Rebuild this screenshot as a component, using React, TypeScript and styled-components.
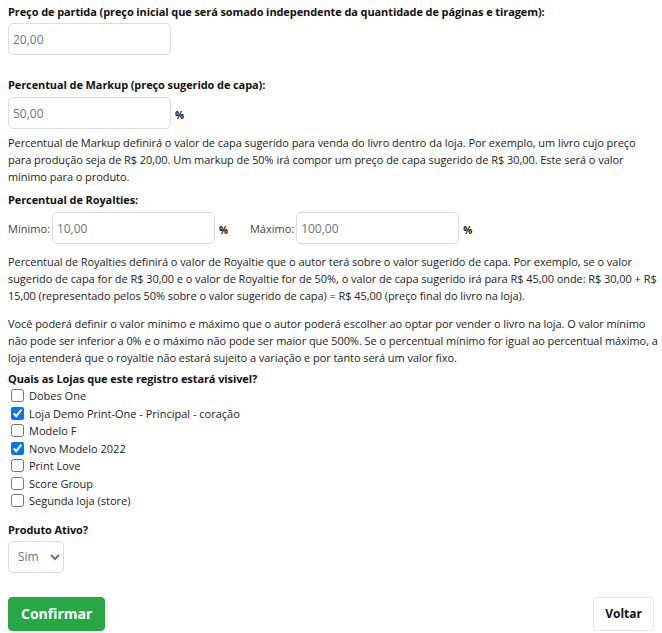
import React from "react";
import styled, { createGlobalStyle } from "styled-components";

const GlobalStyle = createGlobalStyle`
    body {
        margin: 0;
        background: #fff;
        font-family: "Open Sans", "Liberation Sans", sans-serif;
        font-size: 11px;
        line-height: 17px;
        color: #212529;
    }
`

const Page = styled.form`
    padding: 3px 8px 0 8px;
    display: flex;
    flex-direction: column;
`

const Label = styled.div<{ $gap?: number }>`
    font-weight: 700;
    font-size: 11px;
    line-height: 17px;
    color: #111;
    letter-spacing: -0.1px;
    margin-bottom: ${p => p.$gap ?? 4}px;
`

const Field = styled.div<{ $after?: number }>`
    display: flex;
    align-items: center;
    margin-bottom: ${p => p.$after ?? 0}px;
`

const Input = styled.input`
    width: 163px;
    height: 32px;
    box-sizing: border-box;
    border: 1px solid #dcdcdc;
    border-radius: 5px;
    padding: 0 4px;
    font-family: inherit;
    font-size: 12px;
    color: #6c757d;
    background: #fff;
    outline: none;
`

const Percent = styled.span`
    font-weight: 700;
    font-size: 10px;
    margin-left: 4px;
    margin-top: 4px;
    color: #111;
`

const Text = styled.p<{ $after?: number }>`
    margin: 0 0 ${p => p.$after ?? 0}px 0;
    color: #222;
    white-space: nowrap;
    letter-spacing: -0.06px;
`

const RoyaltyRow = styled.div`
    display: flex;
    align-items: center;
    margin-bottom: 9px;
`

const Inline = styled.div`
    display: flex;
    align-items: center;
    margin-right: 22px;
`

const InlineLabel = styled.span`
    margin-right: 2px;
    color: #444;
`

const StoreList = styled.div`
    display: flex;
    flex-direction: column;
    margin-bottom: 11px;
`

const StoreItem = styled.label`
    display: flex;
    align-items: center;
    height: 17.5px;
    font-size: 11px;
    color: #222;
`

const Check = styled.input`
    width: 13px;
    height: 13px;
    margin: 0 5px 0 3px;
`

const Select = styled.select`
    width: 56px;
    height: 32px;
    border: 1px solid #dcdcdc;
    border-radius: 5px;
    padding: 0 4px 0 5px;
    font-family: inherit;
    font-size: 12px;
    color: #6c757d;
    background: #fff;
    outline: none;
`

const Actions = styled.div`
    display: flex;
    justify-content: space-between;
    align-items: center;
    margin-top: 24px;
`

const Button = styled.button<{ $primary?: boolean }>`
    height: 34px;
    padding: 0 ${p => p.$primary ? 12 : 11}px;
    border-radius: 4px;
    font-family: inherit;
    font-weight: 700;
    font-size: ${p => p.$primary ? 14 : 12}px;
    border: 1px solid ${p => p.$primary ? "#28a745" : "#e6e6e6"};
    background: ${p => p.$primary ? "#28a745" : "#fff"};
    color: ${p => p.$primary ? "#fff" : "#111"};
    cursor: pointer;
`

const stores = [
    { name: "Dobes One", checked: false },
    { name: "Loja Demo Print-One - Principal - coração", checked: true },
    { name: "Modelo F", checked: false },
    { name: "Novo Modelo 2022", checked: true },
    { name: "Print Love", checked: false },
    { name: "Score Group", checked: false },
    { name: "Segunda loja (store)", checked: false },
]

const markupText = [
    "Percentual de Markup definirá o valor de capa sugerido para venda do livro dentro da loja. Por exemplo, um livro cujo preço",
    "para produção seja de R$ 20,00. Um markup de 50% irá compor um preço de capa sugerido de R$ 30,00. Este será o valor",
    "mínimo para o produto.",
]

const royaltyText = [
    "Percentual de Royalties definirá o valor de Royaltie que o autor terá sobre o valor sugerido de capa. Por exemplo, se o valor",
    "sugerido de capa for de R$ 30,00 e o valor de Royaltie for de 50%, o valor de capa sugerido irá para R$ 45,00 onde: R$ 30,00 + R$",
    "15,00 (representado pelos 50% sobre o valor sugerido de capa) = R$ 45,00 (preço final do livro na loja).",
]

const limitText = [
    "Você poderá definir o valor mínimo e máximo que o autor poderá escolher ao optar por vender o livro na loja. O valor mínimo",
    "não pode ser inferior a 0% e o máximo não pode ser maior que 500%. Se o percentual mínimo for igual ao percentual máximo, a",
    "loja entenderá que o royaltie não estará sujeito a variação e por tanto será um valor fixo.",
]

function Lines({ lines }: { lines: string[] }) {
    return (
        <>
            {lines.map((line, i) => (
                <React.Fragment key={i}>
                    {line}
                    {i < lines.length - 1 && <br />}
                </React.Fragment>
            ))}
        </>
    )
}

export default function App() {
    return (
        <Page onSubmit={e => e.preventDefault()}>
            <GlobalStyle />

            {/* preço de partida */}
            <Label $gap={3}>Preço de partida (preço inicial que será somado independente da quantidade de páginas e tiragem):</Label>
            <Field $after={21}>
                <Input defaultValue="20,00" />
            </Field>

            {/* markup */}
            <Label>Percentual de Markup (preço sugerido de capa):</Label>
            <Field $after={5}>
                <Input defaultValue="50,00" />
                <Percent>%</Percent>
            </Field>
            <Text $after={6}><Lines lines={markupText} /></Text>

            {/* royalties */}
            <Label>Percentual de Royalties:</Label>
            <RoyaltyRow>
                <Inline>
                    <InlineLabel>Mínimo:</InlineLabel>
                    <Input defaultValue="10,00" />
                    <Percent>%</Percent>
                </Inline>
                <Inline>
                    <InlineLabel>Máximo:</InlineLabel>
                    <Input defaultValue="100,00" />
                    <Percent>%</Percent>
                </Inline>
            </RoyaltyRow>
            <Text $after={11}><Lines lines={royaltyText} /></Text>
            <Text $after={4}><Lines lines={limitText} /></Text>

            {/* lojas */}
            <Label $gap={0}>Quais as Lojas que este registro estará visivel?</Label>
            <StoreList>
                {stores.map((store, index) => (
                    <StoreItem key={index}>
                        <Check type="checkbox" defaultChecked={store.checked} />
                        {store.name}
                    </StoreItem>
                ))}
            </StoreList>

            {/* ativo */}
            <Label $gap={3}>Produto Ativo?</Label>
            <Field>
                <Select defaultValue="sim">
                    <option value="sim">Sim</option>
                    <option value="nao">Não</option>
                </Select>
            </Field>

            <Actions>
                <Button $primary type="submit">Confirmar</Button>
                <Button type="button">Voltar</Button>
            </Actions>
        </Page>
    );
}
